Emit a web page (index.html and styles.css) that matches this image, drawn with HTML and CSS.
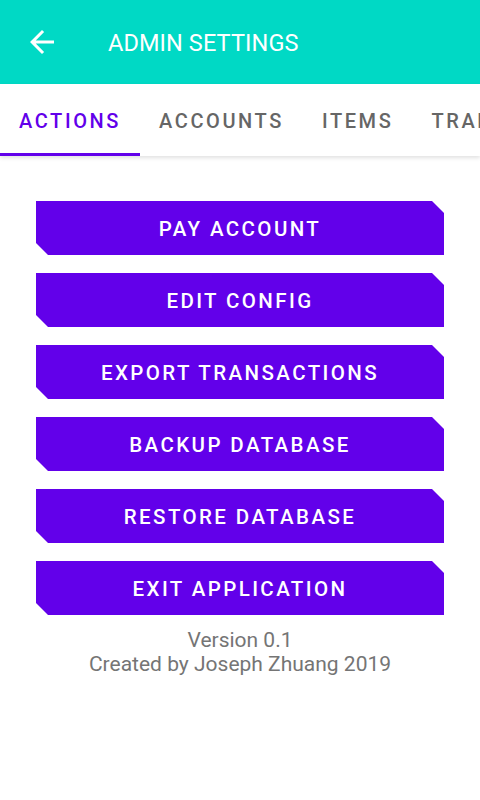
FILE: index.html
```html
<!DOCTYPE html>
<html>
<head>
<meta charset="utf-8">
<link rel="stylesheet" href="styles.css">
</head>
<body>
<header class="appbar">
  <svg class="back" width="36" height="36" viewBox="0 0 24 24"><path d="M20 11H7.83l5.59-5.59L12 4l-8 8 8 8 1.41-1.41L7.83 13H20v-2z" fill="#fff"/></svg>
  <div class="title">ADMIN SETTINGS</div>
</header>
<nav class="tabs">
  <div class="tab active">ACTIONS</div>
  <div class="tab">ACCOUNTS</div>
  <div class="tab">ITEMS</div>
  <div class="tab">TRANSACTIONS</div>
</nav>
<main class="content">
  <div class="btn">PAY ACCOUNT</div>
  <div class="btn">EDIT CONFIG</div>
  <div class="btn">EXPORT TRANSACTIONS</div>
  <div class="btn">BACKUP DATABASE</div>
  <div class="btn">RESTORE DATABASE</div>
  <div class="btn">EXIT APPLICATION</div>
  <div class="footer">
    <div>Version 0.1</div>
    <div>Created by Joseph Zhuang 2019</div>
  </div>
</main>
</body>
</html>
```
FILE: styles.css
```css
html, body { margin: 0; padding: 0; }
body { width: 480px; height: 800px; background: #fff; font-family: Roboto, "Noto Sans", sans-serif; overflow: hidden; }
.appbar { height: 84px; background: #00d9c5; display: flex; align-items: center; padding-left: 24px; box-sizing: border-box; }
.back { width: 36px; height: 36px; }
.title { color: #fff; font-size: 23.5px; margin-left: 48px; letter-spacing: 0.1px; padding-top: 2px; }
.tabs { height: 72px; display: flex; white-space: nowrap; overflow: hidden; box-shadow: 0 2px 4px rgba(0,0,0,0.12); position: relative; }
.tab { font-size: 20px; font-weight: 500; letter-spacing: 2.6px; color: #666; padding: 2px 19px 0; display: flex; align-items: center; height: 72px; box-sizing: border-box; flex-shrink: 0; }
.tab.active { color: #6200ea; width: 140px; border-bottom: 3px solid #6200ea; padding-top: 5px; }
.content { display: flex; flex-direction: column; align-items: center; padding-top: 45px; }
.btn { width: 408px; height: 54px; margin-bottom: 18px; padding-top: 2px; box-sizing: border-box; background: #6200ea; color: #fff; font-size: 20.5px; font-weight: 500; letter-spacing: 2.4px; display: flex; align-items: center; justify-content: center; clip-path: polygon(0 0, 396px 0, 408px 12px, 408px 54px, 12px 54px, 0 42px); }
.footer { margin-top: -5px; text-align: center; color: #757575; font-size: 21px; line-height: 24px; }
```
